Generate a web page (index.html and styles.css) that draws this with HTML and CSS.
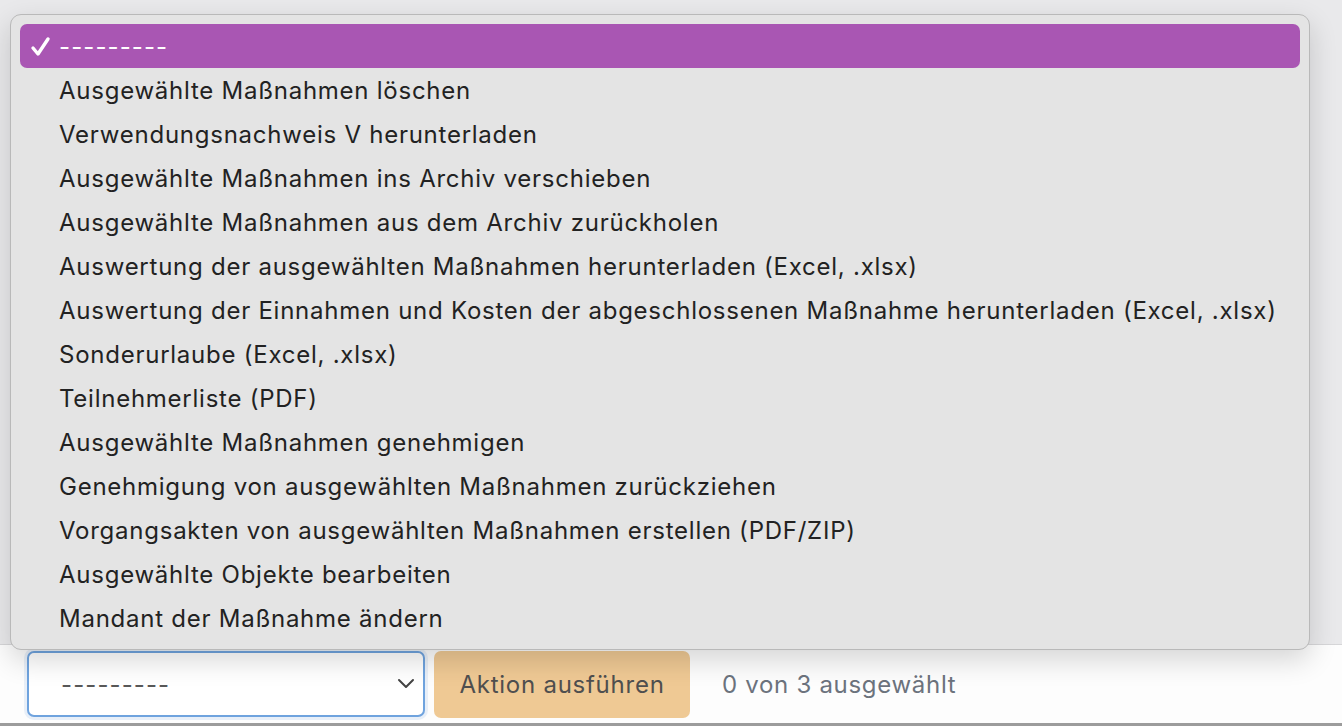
FILE: index.html
```html
<!DOCTYPE html>
<html lang="de">
<head>
<meta charset="utf-8">
<title>Aktionen</title>
<link rel="stylesheet" href="styles.css">
</head>
<body>
<div class="page">
  <div class="content"></div>
  <div class="toolbar">
    <div class="select">
      <span class="select-value dashes">---------</span>
      <svg class="chevron" width="18" height="12" viewBox="0 0 18 12"><polyline points="2,2 9,9 16,2" fill="none" stroke="#444" stroke-width="2" stroke-linecap="round" stroke-linejoin="round"/></svg>
    </div>
    <button class="run">Aktion ausführen</button>
    <span class="count">0 von 3 ausgewählt</span>
  </div>
  <div class="menu">
    <div class="item selected">
      <svg class="check" width="22" height="22" viewBox="0 0 22 22"><polyline points="3,12 8,18 18,3" fill="none" stroke="#fff" stroke-width="3.4" stroke-linecap="round" stroke-linejoin="round"/></svg>
      <span class="dashes">---------</span>
    </div>
    <div class="item">Ausgewählte Maßnahmen löschen</div>
    <div class="item">Verwendungsnachweis V herunterladen</div>
    <div class="item">Ausgewählte Maßnahmen ins Archiv verschieben</div>
    <div class="item">Ausgewählte Maßnahmen aus dem Archiv zurückholen</div>
    <div class="item">Auswertung der ausgewählten Maßnahmen herunterladen (Excel, .xlsx)</div>
    <div class="item">Auswertung der Einnahmen und Kosten der abgeschlossenen Maßnahme herunterladen (Excel, .xlsx)</div>
    <div class="item">Sonderurlaube (Excel, .xlsx)</div>
    <div class="item">Teilnehmerliste (PDF)</div>
    <div class="item">Ausgewählte Maßnahmen genehmigen</div>
    <div class="item">Genehmigung von ausgewählten Maßnahmen zurückziehen</div>
    <div class="item">Vorgangsakten von ausgewählten Maßnahmen erstellen (PDF/ZIP)</div>
    <div class="item">Ausgewählte Objekte bearbeiten</div>
    <div class="item">Mandant der Maßnahme ändern</div>
  </div>
</div>
</body>
</html>
```
FILE: styles.css
```css
* { box-sizing: border-box; }
html, body { margin: 0; padding: 0; }
body {
  width: 1342px;
  height: 726px;
  overflow: hidden;
  font-family: Inter, "Liberation Sans", Arial, sans-serif;
  background: #e9e9eb;
}
.page {
  position: relative;
  width: 1342px;
  height: 726px;
  display: flex;
  flex-direction: column;
}
.content {
  flex: 1;
  background: #e9e9eb;
}
.toolbar {
  height: 82px;
  background: #fdfdfd;
  border-top: 1px solid #d6d6d8;
  border-bottom: 3px solid #9c9c9c;
  display: flex;
  align-items: center;
  padding-left: 27px;
}
.select {
  width: 398px;
  height: 66px;
  border: 2px solid #6fa3de;
  border-radius: 7px;
  background: #fff;
  box-shadow: 0 0 0 3px rgba(111, 163, 222, 0.15);
  display: flex;
  align-items: center;
  justify-content: space-between;
  padding: 0 8px 0 32px;
}
.select-value {
  font-size: 24px;
  color: #585858;
}
.item .dashes, .select .dashes { letter-spacing: 1.1px; }
.chevron { display: block; }
.run {
  margin-left: 9px;
  width: 256px;
  height: 67px;
  border: none;
  border-radius: 7px;
  background: #efc994;
  color: #4f4f4f;
  font-family: Inter, "Liberation Sans", Arial, sans-serif;
  font-size: 24px;
  letter-spacing: 0.75px;
  padding: 0;
}
.count {
  margin-left: 32px;
  font-size: 24px;
  letter-spacing: 0.7px;
  color: #6c737d;
}
.menu {
  position: absolute;
  left: 10px;
  top: 14px;
  width: 1300px;
  height: 636px;
  background: #e4e4e4;
  border: 1px solid #b9b9b9;
  border-radius: 11px;
  padding: 9px;
  box-shadow: 0 10px 28px rgba(0, 0, 0, 0.16);
}
.item {
  height: 44px;
  display: flex;
  align-items: center;
  padding-left: 39px;
  font-size: 24px;
  letter-spacing: 0.75px;
  color: #222;
  white-space: nowrap;
}
.item.selected {
  position: relative;
  background: #a956b3;
  color: #fff;
  border-radius: 7px;
}
.check {
  position: absolute;
  left: 10px;
  top: 12px;
}
```
